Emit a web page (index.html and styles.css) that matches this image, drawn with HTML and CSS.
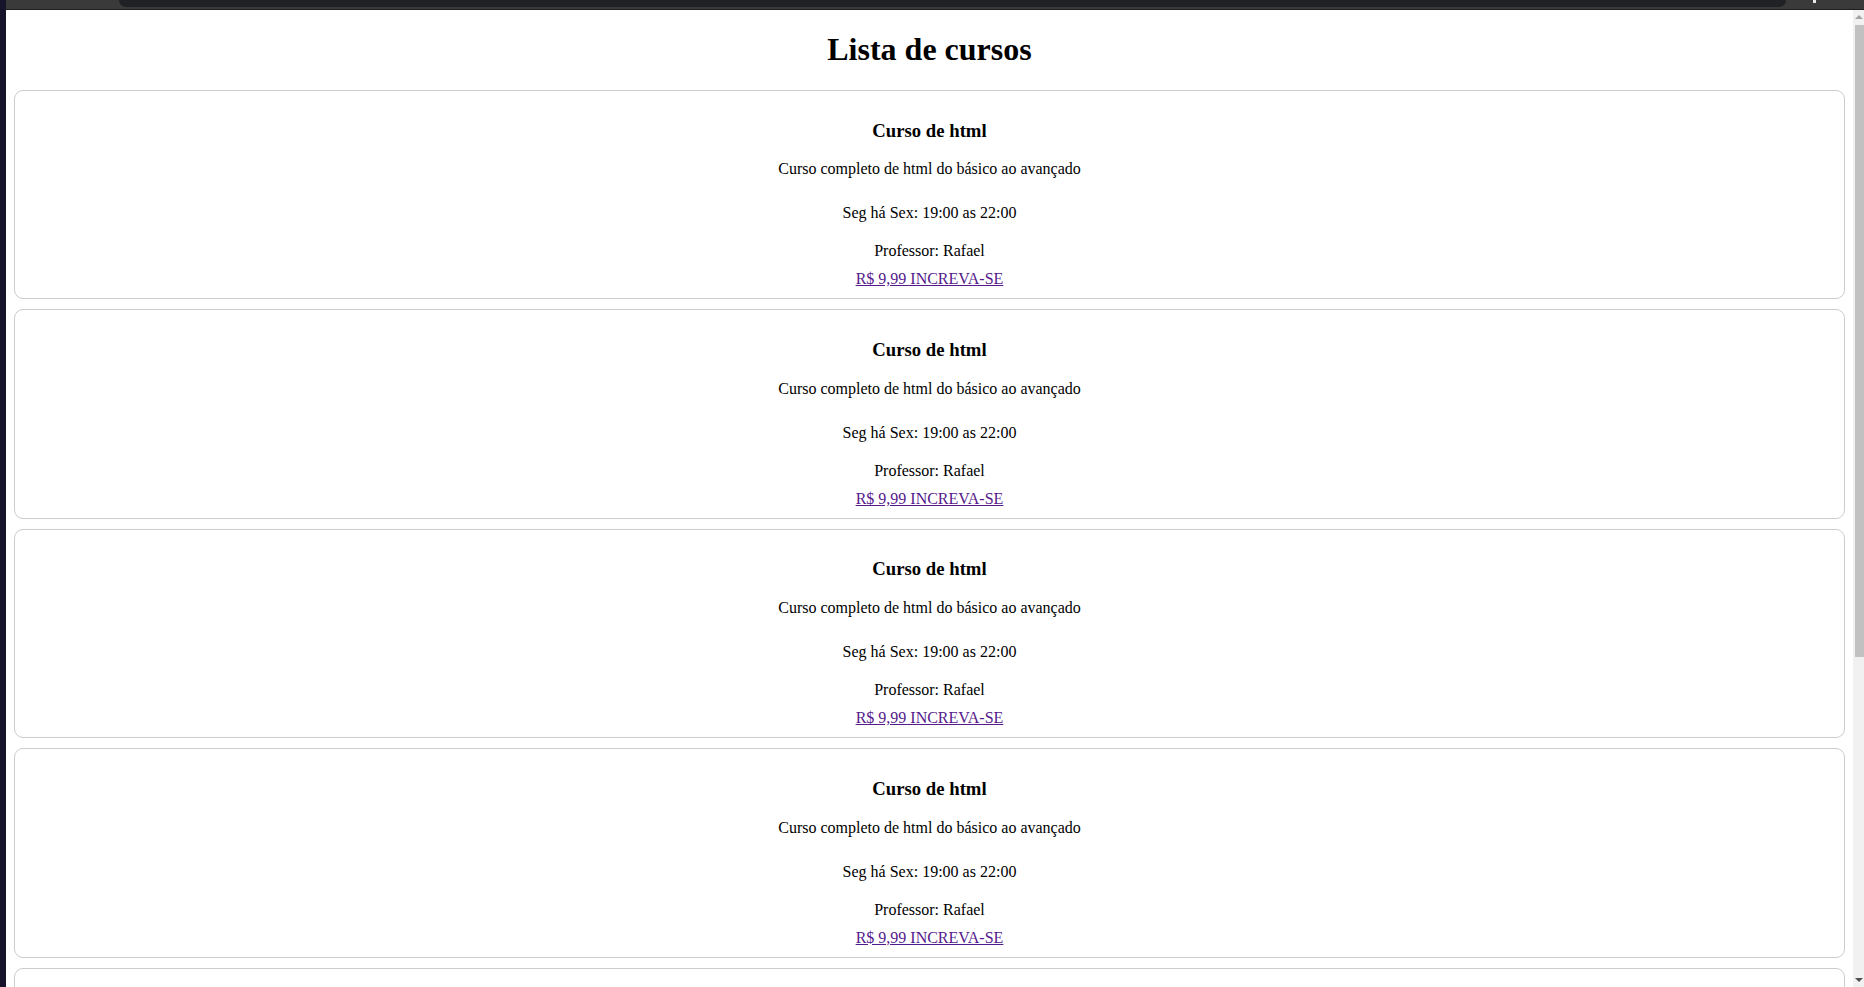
FILE: index.html
```html
<!DOCTYPE html>
<html lang="pt-BR">
<head>
<meta charset="utf-8">
<title>Lista de cursos</title>
<link rel="stylesheet" href="styles.css">
</head>
<body>
<div class="screen">
  <div class="left-strip"></div>
  <div class="window">
    <div class="topbar">
      <div class="topbar-inner"></div>
      <div class="topbar-icon"></div>
    </div>
    <div class="main">
      <div class="viewport">
        <div class="page">
          <h1 class="title">Lista de cursos</h1>

          <div class="card">
            <h3 class="card-title">Curso de html</h3>
            <p class="desc">Curso completo de html do básico ao avançado</p>
            <p class="time">Seg há Sex: 19:00 as 22:00</p>
            <p class="prof">Professor: Rafael</p>
            <div class="buy"><a href="#" class="buy-link">R$ 9,99 INCREVA-SE</a></div>
          </div>

          <div class="card">
            <h3 class="card-title">Curso de html</h3>
            <p class="desc">Curso completo de html do básico ao avançado</p>
            <p class="time">Seg há Sex: 19:00 as 22:00</p>
            <p class="prof">Professor: Rafael</p>
            <div class="buy"><a href="#" class="buy-link">R$ 9,99 INCREVA-SE</a></div>
          </div>

          <div class="card">
            <h3 class="card-title">Curso de html</h3>
            <p class="desc">Curso completo de html do básico ao avançado</p>
            <p class="time">Seg há Sex: 19:00 as 22:00</p>
            <p class="prof">Professor: Rafael</p>
            <div class="buy"><a href="#" class="buy-link">R$ 9,99 INCREVA-SE</a></div>
          </div>

          <div class="card">
            <h3 class="card-title">Curso de html</h3>
            <p class="desc">Curso completo de html do básico ao avançado</p>
            <p class="time">Seg há Sex: 19:00 as 22:00</p>
            <p class="prof">Professor: Rafael</p>
            <div class="buy"><a href="#" class="buy-link">R$ 9,99 INCREVA-SE</a></div>
          </div>

          <div class="card card-peek"></div>
        </div>
      </div>
      <div class="scrollbar">
        <div class="arrow-up"></div>
        <div class="thumb"></div>
        <div class="spacer"></div>
        <div class="arrow-down"></div>
      </div>
    </div>
  </div>
</div>
</body>
</html>
```

FILE: styles.css
```css
html, body {
  margin: 0;
  padding: 0;
  height: 100%;
  overflow: hidden;
}

.screen {
  display: flex;
  width: 1864px;
  height: 987px;
  background: #15142a;
}

.left-strip {
  width: 6px;
  flex: none;
  background: #15142a;
}

.window {
  flex: 1;
  display: flex;
  flex-direction: column;
  min-width: 0;
}

.topbar {
  height: 9px;
  flex: none;
  background: #3a3a3a;
  border-bottom: 1px solid #1f1f1f;
  position: relative;
  display: flex;
}

.topbar-inner {
  margin-left: 113px;
  width: 1667px;
  height: 7px;
  background: #202124;
  border-radius: 0 0 7px 7px;
}

.topbar-icon {
  position: absolute;
  left: 1807px;
  top: 0;
  width: 3px;
  height: 3px;
  background: #e8e8e8;
}

.main {
  flex: 1;
  display: flex;
  min-height: 0;
}

.viewport {
  flex: 1;
  background: #ffffff;
  overflow: hidden;
  font-family: "Liberation Serif", "Times New Roman", serif;
  color: #000;
  font-size: 16px;
}

.page {
  margin: 8px;
}

.title {
  font-size: 32px;
  font-weight: bold;
  text-align: center;
  margin: 21.44px 0;
  line-height: normal;
}

.card {
  border: 1px solid #cccccc;
  border-radius: 9px;
  padding: 10px;
  margin-bottom: 10px;
  text-align: center;
}

.card-peek {
  height: 188px;
}

.card-title {
  font-size: 18.72px;
  font-weight: bold;
  margin: 18.72px 0;
}

.desc {
  margin: 18.72px 0 0;
}

.time {
  margin: 26px 0 0;
}

.prof {
  margin: 20px 0 0;
}

.buy {
  margin-top: 10px;
}

.buy-link {
  color: #551a8b;
  text-decoration: underline;
}

.scrollbar {
  width: 11px;
  flex: none;
  background: #f1f1f1;
  display: flex;
  flex-direction: column;
  align-items: flex-end;
}

.arrow-up {
  margin-top: 5px;
  margin-right: 1px;
  width: 0;
  height: 0;
  border-left: 4px solid transparent;
  border-right: 4px solid transparent;
  border-bottom: 4px solid #a3a3a3;
}

.thumb {
  margin-top: 6px;
  width: 9px;
  height: 632px;
  background: #c1c1c1;
}

.spacer {
  flex: 1;
}

.arrow-down {
  margin-bottom: 5px;
  margin-right: 1px;
  width: 0;
  height: 0;
  border-left: 4px solid transparent;
  border-right: 4px solid transparent;
  border-top: 4px solid #505050;
}
```
